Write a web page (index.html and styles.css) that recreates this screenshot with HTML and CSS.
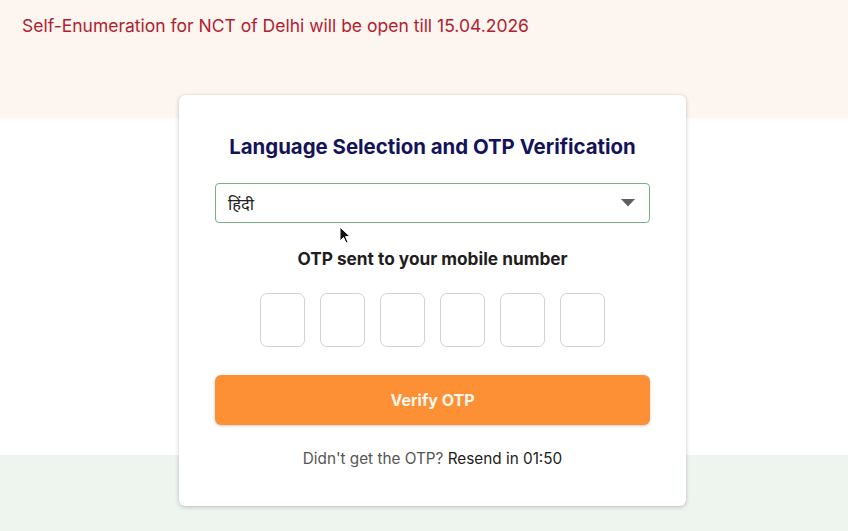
FILE: index.html
```html
<!DOCTYPE html>
<html lang="en">
<head>
<meta charset="utf-8">
<title>Language Selection and OTP Verification</title>
<link rel="stylesheet" href="styles.css">
</head>
<body>
<div class="page">
  <header class="notice-band">
    <p class="notice">Self-Enumeration for NCT of Delhi will be open till 15.04.2026</p>
  </header>
  <main class="main">
    <section class="card">
      <h1 class="title">Language Selection and OTP Verification</h1>
      <div class="select">
        <span class="select-value">हिंदी</span>
        <svg class="caret" width="14" height="8" viewBox="0 0 14 8"><path d="M0 0 H14 L7 7.5 Z" fill="#5f5f5f"/></svg>
      </div>
      <p class="otp-label">OTP sent to your mobile number</p>
      <div class="otp-row">
        <span class="otp-box"></span>
        <span class="otp-box"></span>
        <span class="otp-box"></span>
        <span class="otp-box"></span>
        <span class="otp-box"></span>
        <span class="otp-box"></span>
      </div>
      <button class="verify">Verify OTP</button>
      <p class="resend"><span class="muted">Didn't get the OTP?</span> Resend in 01:50</p>
    </section>
  </main>
  <svg class="cursor" width="12" height="18" viewBox="0 0 12 18"><path d="M1 1 V15 L4.5 11.5 L7 17 L9 16 L6.6 10.6 H11 Z" fill="#111" stroke="#fff" stroke-width="1"/></svg>
</div>
</body>
</html>
```
FILE: styles.css
```css
* { box-sizing: border-box; }
html, body { margin: 0; padding: 0; }
body {
  width: 848px;
  height: 531px;
  overflow: hidden;
  font-family: Inter, "Noto Sans", "Noto Sans Devanagari", sans-serif;
  background: linear-gradient(to bottom, #fcf5f0 0, #fcf5f0 118px, #ffffff 118px, #ffffff 455px, #eef5ef 455px);
}
.page { position: relative; height: 531px; }
.notice-band { height: 95px; padding: 14px 0 0 22px; }
.notice {
  margin: 0;
  font-size: 17.5px;
  line-height: 24px;
  color: #b02130;
}
.main { padding-left: 179px; }
.card {
  width: 507px;
  background: #fff;
  border-radius: 6px;
  box-shadow: 0 1px 4px rgba(0,0,0,0.22), 0 0 1px rgba(0,0,0,0.1);
  padding: 38px 36px 35px;
  display: flex;
  flex-direction: column;
  align-items: stretch;
}
.title {
  margin: 0;
  text-align: center;
  font-size: 20.4px;
  line-height: 28px;
  font-weight: 700;
  color: #13135c;
}
.select {
  margin-top: 22px;
  height: 40px;
  border: 1.6px solid #78b084;
  border-radius: 4px;
  display: flex;
  align-items: center;
  justify-content: space-between;
  padding: 0 14px 0 12px;
}
.select-value { font-size: 16.5px; color: #222; }
.caret { display: block; }
.otp-label {
  margin: 24px 0 0;
  text-align: center;
  font-size: 17.25px;
  line-height: 24px;
  font-weight: 700;
  color: #1e1e1e;
}
.otp-row {
  margin-top: 22px;
  display: flex;
  justify-content: center;
  gap: 15px;
}
.otp-box {
  width: 45px;
  height: 54px;
  border: 1.5px solid #d3d3d3;
  border-radius: 7px;
}
.verify {
  margin-top: 28px;
  height: 50px;
  border: none;
  border-radius: 6px;
  background: #fd9035;
  color: #fff6ec;
  font-family: inherit;
  font-size: 16px;
  font-weight: 700;
  box-shadow: 0 1px 3px rgba(0,0,0,0.2);
}
.resend {
  margin: 22px 0 0;
  text-align: center;
  font-size: 15.3px;
  line-height: 24px;
  color: #1c1c1c;
}
.muted { color: #555; }
.cursor { position: absolute; left: 339px; top: 226px; }
```
